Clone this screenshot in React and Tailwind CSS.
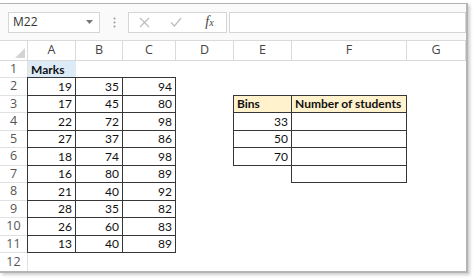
import React from "react";

const A = [19, 17, 22, 27, 18, 16, 21, 28, 26, 13];
const B = [35, 45, 72, 37, 74, 80, 40, 35, 60, 40];
const C = [94, 80, 98, 86, 98, 89, 92, 82, 83, 89];
const BINS = [33, 50, 70];

function Cell({ children, bordered, bg, bold, align = "right" }) {
  const cls = [
    "flex items-end pb-px text-[12px] leading-[14px] text-[#111] font-['Lato',sans-serif] whitespace-nowrap overflow-visible px-[3px]",
    align === "right" ? "justify-end" : "justify-start",
    bordered ? "border border-[#363636] -ml-px -mt-px relative z-10" : "",
    bg || "bg-white",
    bold ? "font-bold" : "",
  ].join(" ");
  return <div className={cls}>{children}</div>;
}

function RowHead({ n }) {
  return (
    <div className="flex items-center justify-center border-r border-b border-[#e1e1e1] bg-white text-[12.5px] text-[#555] font-['Open_Sans',sans-serif]">
      {n}
    </div>
  );
}

function ColHead({ l }) {
  return (
    <div className="flex items-center justify-center border-r border-b border-[#dadada] bg-white text-[12.5px] text-[#444] font-['Open_Sans',sans-serif]">
      {l}
    </div>
  );
}

export default function App() {
  const rows = [];
  for (let r = 1; r <= 12; r++) {
    const cells = [];
    cells.push(<RowHead key={`h${r}`} n={r} />);
    if (r === 1) {
      cells.push(
        <Cell key="a" bg="bg-[#ddebf7]" bold align="left">
          Marks
        </Cell>
      );
    } else if (r >= 2 && r <= 11) {
      cells.push(
        <Cell key="a" bordered>
          {A[r - 2]}
        </Cell>
      );
    } else cells.push(<Cell key="a" />);
    if (r >= 2 && r <= 11)
      cells.push(
        <Cell key="b" bordered>
          {B[r - 2]}
        </Cell>
      );
    else cells.push(<Cell key="b" />);
    if (r >= 2 && r <= 11)
      cells.push(
        <Cell key="c" bordered>
          {C[r - 2]}
        </Cell>
      );
    else cells.push(<Cell key="c" />);
    cells.push(<Cell key="d" />);
    if (r === 3) {
      cells.push(
        <Cell key="e" bordered bg="bg-[#fff2cc]" bold align="left">
          Bins
        </Cell>
      );
      cells.push(
        <Cell key="f" bordered bg="bg-[#fff2cc]" bold align="left">
          Number of students
        </Cell>
      );
    } else if (r >= 4 && r <= 6) {
      cells.push(
        <Cell key="e" bordered>
          {BINS[r - 4]}
        </Cell>
      );
      cells.push(<Cell key="f" bordered />);
    } else if (r === 7) {
      cells.push(<Cell key="e" />);
      cells.push(<Cell key="f" bordered />);
    } else {
      cells.push(<Cell key="e" />);
      cells.push(<Cell key="f" />);
    }
    cells.push(<Cell key="g" />);
    rows.push(<React.Fragment key={r}>{cells}</React.Fragment>);
  }

  return (
    <div className="w-[474px] h-[279px] bg-white overflow-hidden">
      <div className="mt-[3px] w-[468px] h-[270px] border-t border-r-2 border-b-2 border-[#b4b4b4] shadow-[2px_2px_3px_rgba(0,0,0,0.2)] bg-white overflow-hidden flex flex-col">
        <div className="h-[36px] shrink-0 bg-[#fafafa] flex items-center pl-[8px]">
          <div className="w-[92px] h-[21px] border border-[#d6d6d6] bg-white flex items-center justify-between pl-[4px] pr-[6px]">
            <span className="text-[12px] text-[#333] font-['Open_Sans',sans-serif]">M22</span>
            <svg width="7" height="4" viewBox="0 0 7 4">
              <path d="M0 0 L7 0 L3.5 4 Z" fill="#777" />
            </svg>
          </div>
          <div className="w-[28px] flex justify-center">
            <svg width="3" height="11" viewBox="0 0 3 11">
              <circle cx="1.5" cy="1.5" r="1" fill="#999" />
              <circle cx="1.5" cy="5.5" r="1" fill="#999" />
              <circle cx="1.5" cy="9.5" r="1" fill="#999" />
            </svg>
          </div>
          <div className="w-[99px] h-[21px] border border-[#d6d6d6] bg-white flex items-center">
            <div className="w-[30px] flex justify-center">
              <svg width="11" height="11" viewBox="0 0 11 11">
                <path d="M1 1 L10 10 M10 1 L1 10" stroke="#bdbdbd" strokeWidth="1.2" />
              </svg>
            </div>
            <div className="w-[34px] flex justify-center">
              <svg width="12" height="10" viewBox="0 0 12 10">
                <path d="M1 5.5 L4.5 9 L11 1" stroke="#bdbdbd" strokeWidth="1.2" fill="none" />
              </svg>
            </div>
            <div className="flex-1 flex justify-center">
              <span className="text-[14px] italic text-[#444] font-['Liberation_Serif',serif] leading-none">
                f<span className="text-[10px]">x</span>
              </span>
            </div>
          </div>
          <div className="ml-[2px] flex-1 h-[21px] border border-[#d6d6d6] bg-white" />
        </div>
        <div className="grid grid-cols-[28px_48px_47px_53px_58px_58px_115px_1fr] grid-rows-[20px_17px_18px_17px_18px_17px_18px_17px_18px_17px_18px_17px_20px] border-t border-[#dadada]">
          <div className="border-r border-b border-[#dadada] bg-white relative">
            <svg className="absolute right-[2px] bottom-[2px]" width="10" height="10" viewBox="0 0 10 10">
              <path d="M10 0 L10 10 L0 10 Z" fill="#d4d4d4" />
            </svg>
          </div>
          {["A", "B", "C", "D", "E", "F", "G"].map((l) => (
            <ColHead key={l} l={l} />
          ))}
          {rows}
        </div>
      </div>
    </div>
  );
}
